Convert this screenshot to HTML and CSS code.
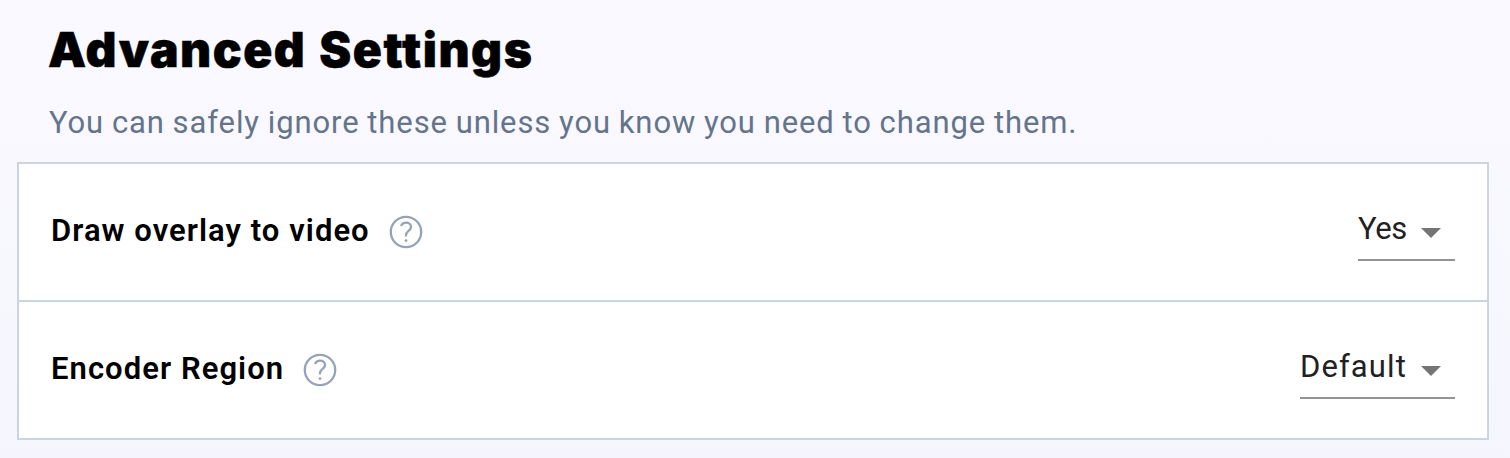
FILE: index.html
```html
<!DOCTYPE html>
<html lang="en">
<head>
    <meta charset="UTF-8">
    <meta name="viewport" content="width=device-width, initial-scale=1.0">
    <title>Advanced Settings</title>
    <link rel="stylesheet" href="styles.css">
</head>
<body>
    <div class="header">
        <h1>Advanced Settings</h1>
        <p>You can safely ignore these unless you know you need to change them.</p>
    </div>

    <div class="settings">
        <div class="row">
            <div class="name">
                <span class="label label-overlay">Draw overlay to video</span>
                <svg class="help" viewBox="0 0 34 34">
                    <circle cx="17" cy="17" r="15.2"/>
                    <path d="M12.4 10.1C13.4 8.5 15 7.7 17 7.7C20 7.7 22 9.5 22 12C22 14.1 20.8 15 19.3 16.1C17.8 17.2 17 18.2 17 20.5"/>
                    <circle class="dot" cx="17" cy="25.6" r="1.4"/>
                </svg>
            </div>
            <div class="select">
                <span class="value value-yes">Yes</span>
                <span class="arrow"></span>
            </div>
        </div>

        <div class="row">
            <div class="name">
                <span class="label label-region">Encoder Region</span>
                <svg class="help" viewBox="0 0 34 34">
                    <circle cx="17" cy="17" r="15.2"/>
                    <path d="M12.4 10.1C13.4 8.5 15 7.7 17 7.7C20 7.7 22 9.5 22 12C22 14.1 20.8 15 19.3 16.1C17.8 17.2 17 18.2 17 20.5"/>
                    <circle class="dot" cx="17" cy="25.6" r="1.4"/>
                </svg>
            </div>
            <div class="select">
                <span class="value value-default">Default</span>
                <span class="arrow"></span>
            </div>
        </div>
    </div>
</body>
</html>
```
FILE: styles.css
```css
* {
    box-sizing: border-box;
}

body {
    font-family: Roboto, "Liberation Sans", sans-serif;
    margin: 0;
    padding: 22px 21px 0 17px;
    height: 458px;
    overflow: hidden;
    background: linear-gradient(#faf9ff, #f5f6fd);
    color: #000;
}

.header {
    height: 140px;
    padding-left: 32px;
    white-space: nowrap;
}

h1 {
    margin: 0 0 0 -1px;
    font-family: Inter, sans-serif;
    font-size: 48px;
    font-weight: 900;
    line-height: 55px;
    letter-spacing: 1.5px;
    word-spacing: 2px;
    -webkit-text-stroke: 0.5px #000;
}

p {
    margin: 23px 0 0;
    color: #64748b;
    font-size: 31px;
    line-height: 45px;
    letter-spacing: 0.9px;
    word-spacing: -0.8px;
}

.settings {
    height: 278px;
    background-color: #fff;
    border: 2px solid #cbd5e1;
}

.row {
    display: flex;
    justify-content: space-between;
    height: 138px;
    padding: 40px 32px 0;
}

.row + .row {
    border-top: 2px solid #cbd5e1;
    height: 138px;
    margin-top: -2px;
}

.name {
    display: flex;
    height: 52px;
    white-space: nowrap;
}

.label {
    font-size: 31px;
    font-weight: 600;
    line-height: 53px;
    letter-spacing: 1.05px;
}

.label-overlay {
    width: 338px;
}

.label-region {
    width: 252px;
}

.help {
    width: 34px;
    height: 34px;
    margin-top: 11px;
    fill: none;
    stroke: #94a3b8;
    stroke-width: 2.3;
    stroke-linecap: round;
}

.help .dot {
    fill: #94a3b8;
    stroke: none;
}

.select {
    display: flex;
    height: 57px;
    padding-right: 14px;
    border-bottom: 2px solid #949494;
    color: #212121;
    font-size: 31px;
    line-height: 49px;
    white-space: nowrap;
}

.value-yes {
    width: 63px;
    letter-spacing: -0.4px;
}

.value-default {
    width: 121px;
    letter-spacing: 1.1px;
}

.arrow {
    width: 20px;
    height: 10px;
    margin-top: 24px;
    background-color: #757575;
    clip-path: polygon(0 0, 100% 0, 50% 100%);
}
```
